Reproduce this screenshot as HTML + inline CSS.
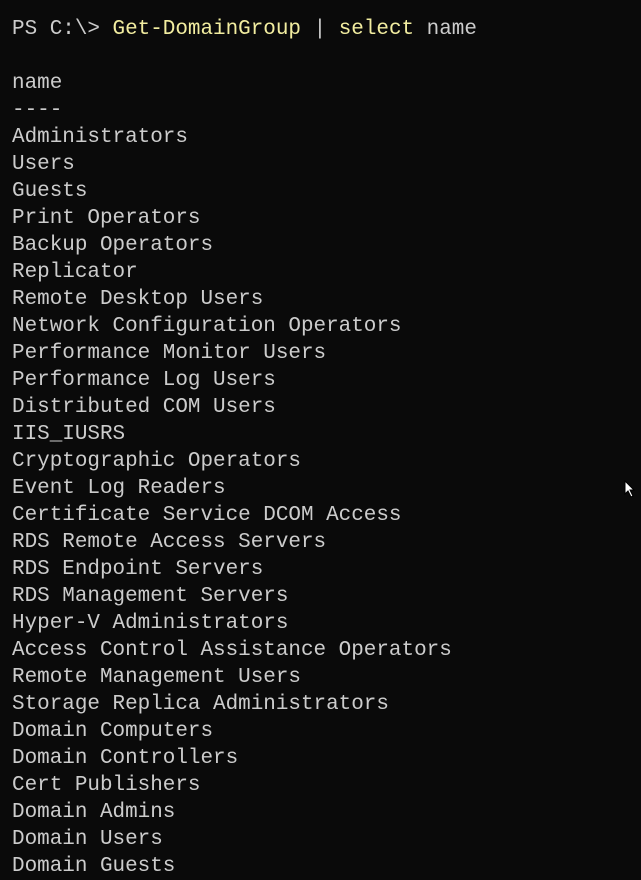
<!DOCTYPE html>
<html><head><style>
html,body{margin:0;padding:0;background:#0a0a0a;width:641px;height:879px;overflow:hidden}
pre{margin:0;position:absolute;left:12px;top:16px;font-family:"Liberation Mono",monospace;font-size:20.95px;line-height:27px;color:#cccccc}
.y{color:#f2eda0}
.cur{position:absolute;left:624px;top:480px}
</style></head><body>
<pre>PS C:\&gt; <span class="y">Get-DomainGroup</span> | <span class="y">select</span> name

name
----
Administrators
Users
Guests
Print Operators
Backup Operators
Replicator
Remote Desktop Users
Network Configuration Operators
Performance Monitor Users
Performance Log Users
Distributed COM Users
IIS_IUSRS
Cryptographic Operators
Event Log Readers
Certificate Service DCOM Access
RDS Remote Access Servers
RDS Endpoint Servers
RDS Management Servers
Hyper-V Administrators
Access Control Assistance Operators
Remote Management Users
Storage Replica Administrators
Domain Computers
Domain Controllers
Cert Publishers
Domain Admins
Domain Users
Domain Guests</pre>
<svg class="cur" width="12" height="18" viewBox="0 0 12 18"><path d="M1 1 L1 14 L4 11 L7 17 L9 16 L6 10 L10 10 Z" fill="#fff" stroke="#000" stroke-width="1"/></svg>
</body></html>
